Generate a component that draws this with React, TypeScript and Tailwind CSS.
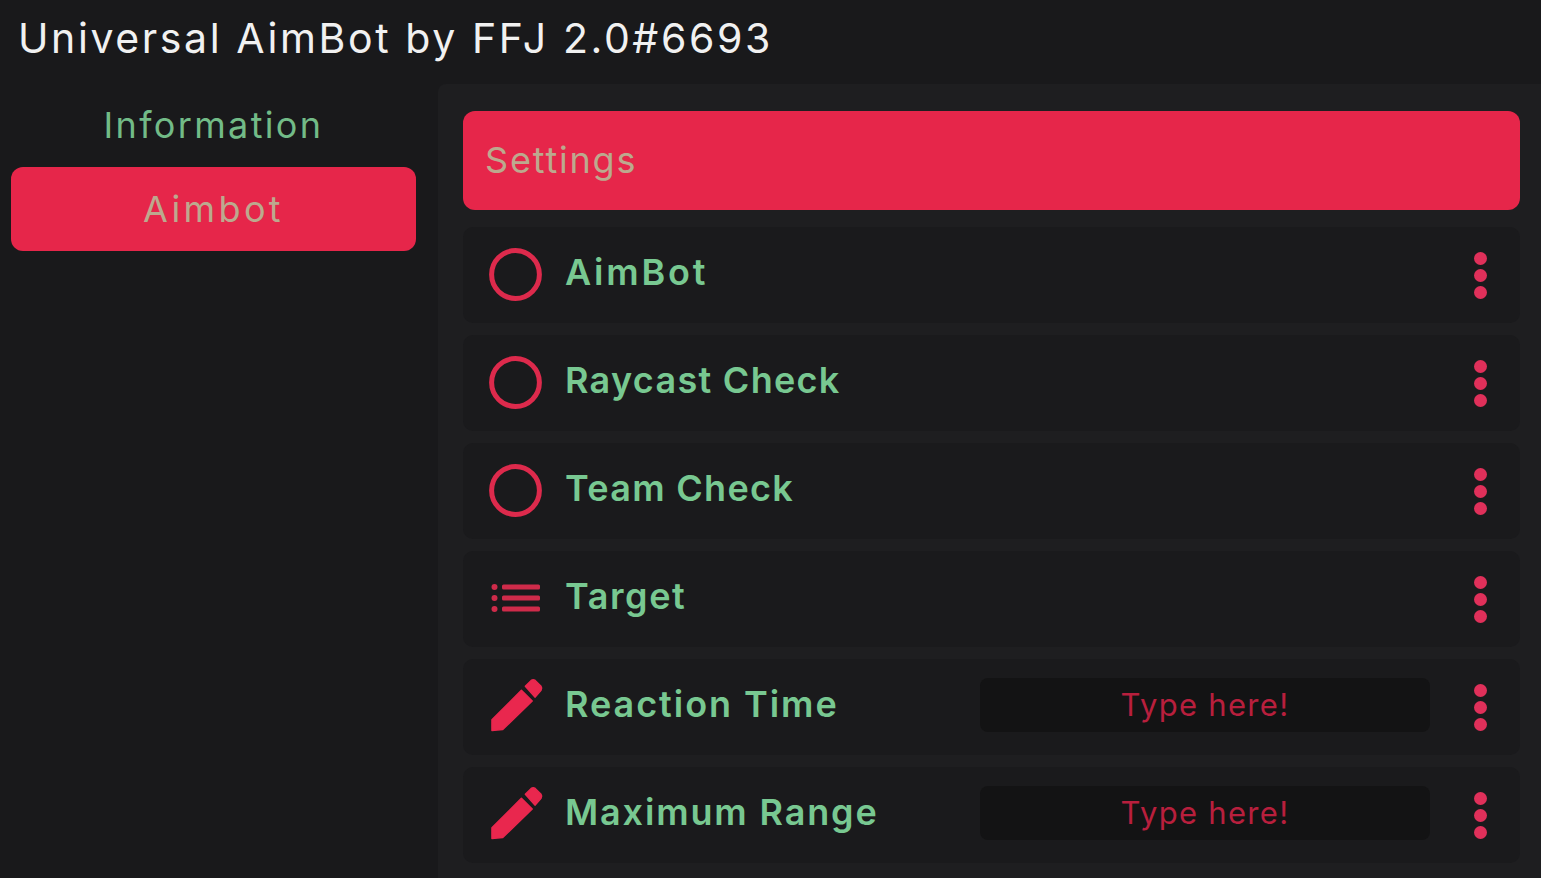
const font = { fontFamily: '"Inter", "Liberation Sans", sans-serif' };

function Ring() {
  return (
    <svg width="53" height="53" viewBox="0 0 53 53" className="mb-[2px] mr-[1px] block">
      <circle cx="26.500" cy="26.500" r="23.900" fill="none" stroke="#dd2a4c" strokeWidth="5" />
    </svg>
  );
}

function ListGlyph() {
  return (
    <svg width="50" height="30" viewBox="0 0 50 30" className="mb-[2px] block">
      <g fill="#cf2b4a">
        <circle cx="3.500" cy="4" r="3" />
        <circle cx="3.500" cy="15" r="3" />
        <circle cx="3.500" cy="26" r="3" />
        <rect x="11" y="1.500" width="38" height="5" rx="1.500" />
        <rect x="11" y="12.500" width="38" height="5" rx="1.500" />
        <rect x="11" y="23.500" width="38" height="5" rx="1.500" />
      </g>
    </svg>
  );
}

function Pencil() {
  return (
    <svg width="56" height="56" viewBox="0 0 56 56" className="mb-[4px] ml-[1px] block">
      <g fill="#e9274e" stroke="#e9274e" strokeWidth="1.500" strokeLinejoin="round">
        <path d="M3 43 L33 13 L44 24 L14 53 L3 54 Z" />
        <path d="M37 9 L43 3 Q45 1.500 47 3 L53 9 Q54.500 11 53 13 L47 20 Z" />
      </g>
    </svg>
  );
}

function Dots() {
  return (
    <div className="flex w-[14px] flex-col items-center gap-[4px]">
      <span className="h-[13px] w-[13px] rounded-full bg-[#e0305a]" />
      <span className="h-[13px] w-[13px] rounded-full bg-[#e0305a]" />
      <span className="h-[13px] w-[13px] rounded-full bg-[#e0305a]" />
    </div>
  );
}

type RowData = { label: string; kind: "ring" | "list" | "edit"; spacing: string };

const rows: RowData[] = [
  { label: "AimBot", kind: "ring", spacing: "tracking-[2.8px]" },
  { label: "Raycast Check", kind: "ring", spacing: "tracking-[1.3px]" },
  { label: "Team Check", kind: "ring", spacing: "tracking-[1.3px]" },
  { label: "Target", kind: "list", spacing: "tracking-[1.6px]" },
  { label: "Reaction Time", kind: "edit", spacing: "tracking-[1.95px]" },
  { label: "Maximum Range", kind: "edit", spacing: "tracking-[1.85px]" },
];

function Row({ row }: { row: RowData }) {
  return (
    <div className="flex h-[96px] items-center rounded-[10px] bg-[#1a1a1c] pl-[25px] pr-[33px]">
      <div className="flex w-[56px] items-center justify-center">
        {row.kind === "ring" && <Ring />}
        {row.kind === "list" && <ListGlyph />}
        {row.kind === "edit" && <Pencil />}
      </div>
      <span className={`mb-[7px] ml-[21px] text-[36px] font-semibold text-[#78c891] ${row.spacing}`}>{row.label}</span>
      <div className="flex-1" />
      {row.kind === "edit" && (
        <div className="mb-[4px] mr-[43px] flex h-[54px] w-[450px] items-center justify-center rounded-[8px] bg-[#131314] text-[31px] tracking-[1.3px] text-[#b81f3d]">
          Type here!
        </div>
      )}
      <Dots />
    </div>
  );
}

export default function App() {
  return (
    <div className="flex h-[878px] w-full flex-col overflow-hidden bg-[#19191b]" style={font}>
      <header className="flex h-[84px] items-center pb-[7px] pl-[18px] text-[41px] tracking-[2.6px] text-[#f1f1f1]">
        Universal AimBot by FFJ 2.0#6693
      </header>
      <div className="flex min-h-0 flex-1">
        <aside className="w-[438px] shrink-0 px-[11px] text-[36px]">
          <div className="flex h-[83px] w-[405px] items-center justify-center pb-[2px] tracking-[2.35px] text-[#72bb87]">
            Information
          </div>
          <div className="flex h-[84px] w-[405px] items-center justify-center rounded-[12px] bg-[#e6264a] tracking-[3.4px] text-[#bca98e]">
            Aimbot
          </div>
        </aside>
        <main className="flex min-w-0 flex-1 flex-col rounded-tl-[8px] bg-[#1e1e20] pb-[15px] pl-[25px] pr-[21px] pt-[27px]">
          <div className="mb-[17px] flex h-[99px] items-center rounded-[12px] bg-[#e6264a] pb-[2px] pl-[22px] text-[36px] tracking-[1.8px] text-[#bca98e]">
            Settings
          </div>
          <div className="flex flex-col gap-[12px]">
            {rows.map((r) => (
              <Row key={r.label} row={r} />
            ))}
          </div>
        </main>
      </div>
    </div>
  );
}
